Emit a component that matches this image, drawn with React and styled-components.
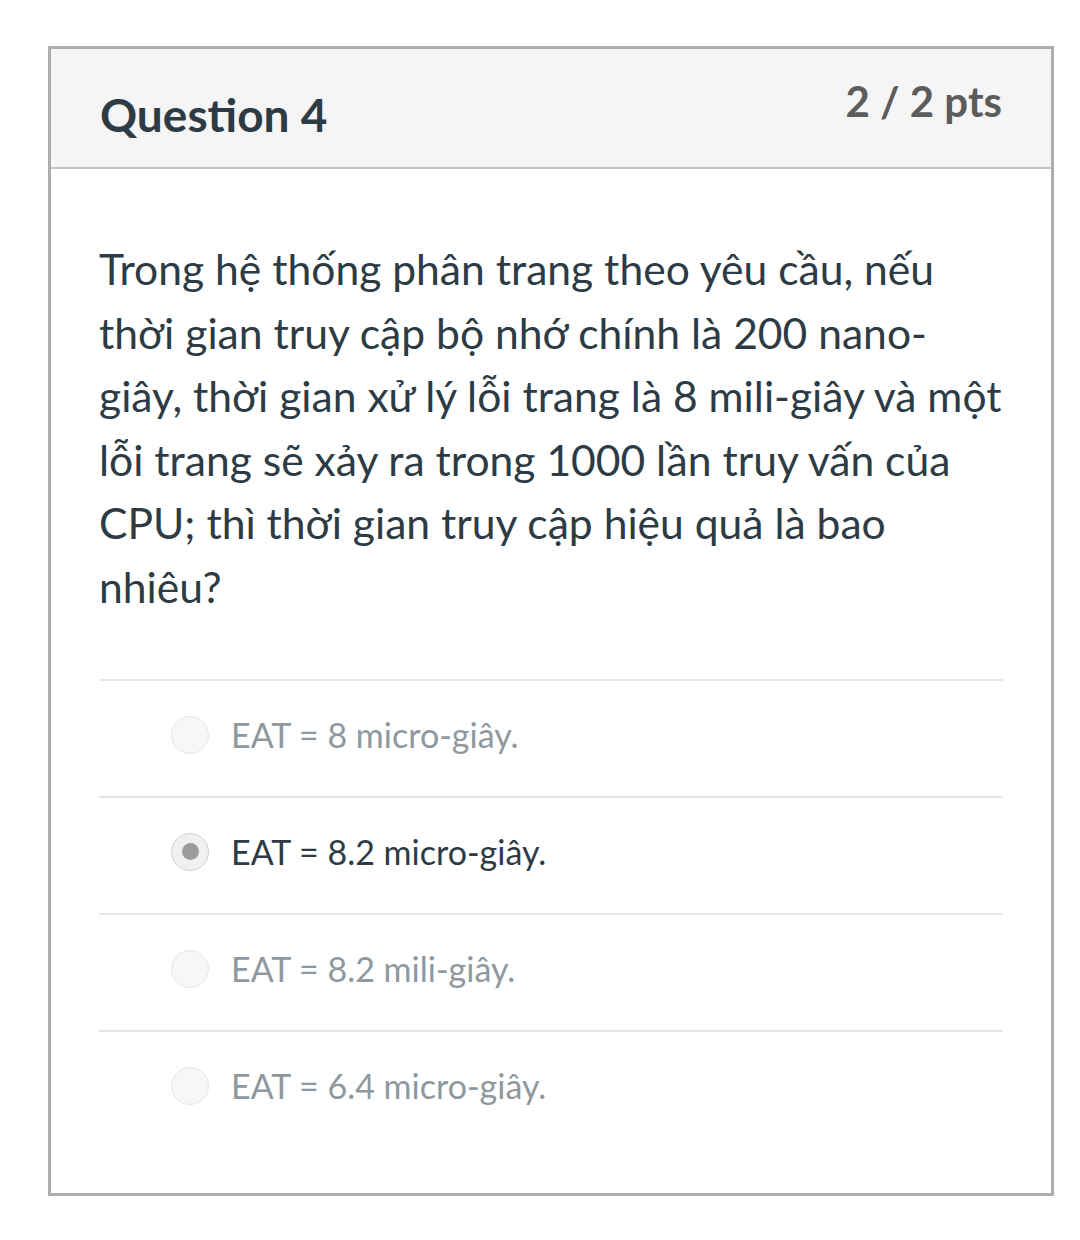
import React from 'react';
import styled, { createGlobalStyle } from 'styled-components';

const GlobalStyle = createGlobalStyle`
    body {
        margin: 0;
        background: #ffffff;
        font-family: Lato, 'Noto Sans', sans-serif;
    }
`;

const Page = styled.div`
    padding: 46px 26px 40px 48px;
`;

const Card = styled.div`
    width: 1006px;
    box-sizing: border-box;
    border: 3px solid #adadad;
    background: #fff;
`;

const Header = styled.div`
    display: flex;
    justify-content: space-between;
    align-items: flex-start;
    height: 120px;
    box-sizing: border-box;
    padding: 0 49px;
    background: #f5f5f5;
    border-bottom: 2px solid #c4c4c4;
`;

const Title = styled.h2`
    margin: 0;
    padding-top: 37px;
    font-size: 46px;
    font-weight: 700;
    line-height: 58px;
    color: #2d3b45;
`;

const Points = styled.div`
    padding-top: 23px;
    font-size: 42px;
    font-weight: 700;
    line-height: 58px;
    color: #5c5c5c;
`;

const Body = styled.div`
    padding: 68px 48px 46px 48px;
`;

const QuestionText = styled.p`
    margin: 0 -6px 61px 0;
    font-size: 42.6px;
    line-height: 63.5px;
    color: #2d3b45;
`;

const Answer = styled.label`
    display: flex;
    align-items: center;
    gap: 22px;
    height: 107px;
    padding: 0 0 8px 72px;
    box-sizing: content-box;
    border-top: 2px solid #e6e6e6;
    font-size: 34px;
    color: ${(p) => (p.$selected ? '#2d3b45' : '#8f989e')};
`;

const Radio = styled.span`
    display: flex;
    align-items: center;
    justify-content: center;
    width: 36px;
    height: 36px;
    border-radius: 50%;
    background: ${(p) => (p.$selected ? '#f0f0f0' : '#f7f7f7')};
    border: 1px solid ${(p) => (p.$selected ? '#d2d2d2' : '#e6e6e6')};
    &::after {
        content: '';
        display: ${(p) => (p.$selected ? 'block' : 'none')};
        width: 17px;
        height: 17px;
        border-radius: 50%;
        background: #9b9b9b;
    }
`;

const answers = [
    { id: 1, text: 'EAT = 8 micro-giây.' },
    { id: 2, text: 'EAT = 8.2 micro-giây.', selected: true },
    { id: 3, text: 'EAT = 8.2 mili-giây.' },
    { id: 4, text: 'EAT = 6.4 micro-giây.' },
];

const App = () => {
    return (
        <>
            <GlobalStyle />
            <Page>
                <Card>
                    <Header>
                        <Title>Question 4</Title>
                        <Points>2 / 2 pts</Points>
                    </Header>
                    <Body>
                        <QuestionText>
                            Trong hệ thống phân trang theo yêu cầu, nếu thời gian truy cập bộ
                            nhớ chính là 200 nano-giây, thời gian xử lý lỗi trang là 8 mili-giây
                            và một lỗi trang sẽ xảy ra trong 1000 lần truy vấn của CPU; thì thời
                            gian truy cập hiệu quả là bao nhiêu?
                        </QuestionText>
                        {answers.map((a) => (
                            <Answer key={a.id} $selected={a.selected}>
                                <Radio $selected={a.selected} />
                                {a.text}
                            </Answer>
                        ))}
                    </Body>
                </Card>
            </Page>
        </>
    );
};

export default App;
